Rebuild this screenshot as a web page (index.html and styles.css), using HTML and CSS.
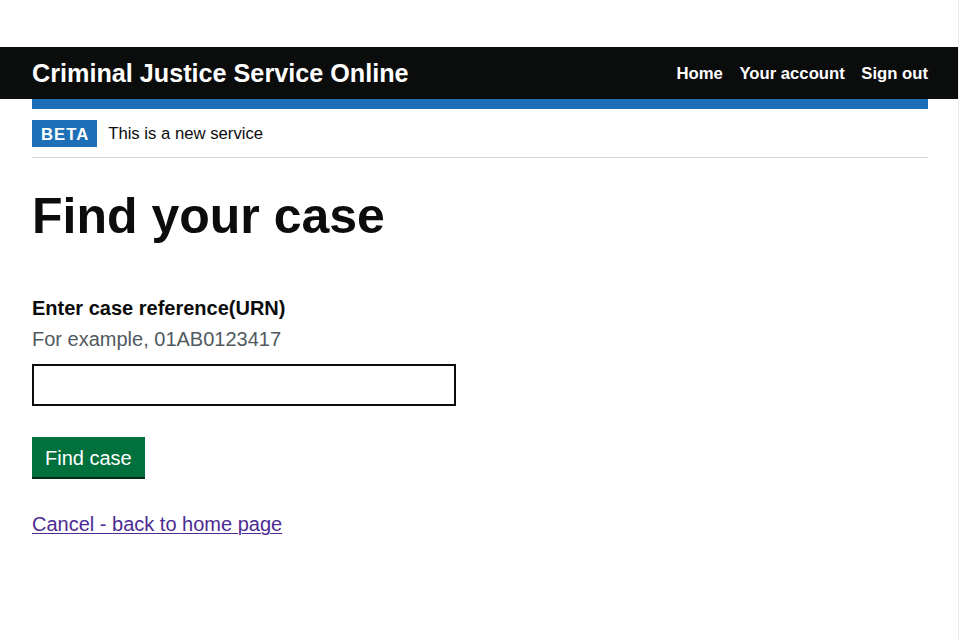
FILE: index.html
```html
<!DOCTYPE html>
<html lang="en">

<head>
    <meta charset="UTF-8">
    <meta name="viewport" content="width=device-width, initial-scale=1.0">
    <title>Find your case - Criminal Justice Service Online</title>
    <link rel="stylesheet" href="styles.css">
</head>

<body>
    <div class="page">
        <header class="header">
            <a class="service-name" href="#">Criminal Justice Service Online</a>
            <nav class="menu">
                <a href="#">Home</a>
                <a href="#">Your account</a>
                <a href="#">Sign out</a>
            </nav>
        </header>

        <div class="container">
            <div class="blue-bar"></div>
            <div class="phase-banner">
                <strong class="tag">BETA</strong>
                <span class="phase-text">This is a new service</span>
            </div>

            <main class="main">
                <h1 class="heading">Find your case</h1>
                <form class="form" action="#">
                    <label class="label" for="urn">Enter case reference(URN)</label>
                    <div class="hint">For example, 01AB0123417</div>
                    <input class="input" id="urn" name="urn" type="text">
                    <div>
                        <button class="button" type="submit">Find case</button>
                    </div>
                </form>
                <a class="back-link" href="#">Cancel - back to home page</a>
            </main>
        </div>
    </div>
</body>

</html>
```

FILE: styles.css
```css
html {
    box-sizing: border-box;
    font-family: "Liberation Sans", Arial, sans-serif;
    font-size: 16px;
}

*,
*:before,
*:after {
    box-sizing: inherit;
}

body {
    margin: 0;
    background: #fff;
    color: #0b0c0c;
}

.page {
    width: 959px;
    min-height: 640px;
    padding-top: 47px;
    border-right: 1px solid #ececec;
}

/* header */
.header {
    height: 52px;
    padding: 0 30px 0 32px;
    display: flex;
    justify-content: space-between;
    align-items: center;
    background-color: #0b0c0c;
}

.service-name {
    color: #fff;
    font-size: 25.2px;
    font-weight: bold;
    text-decoration: none;
}

.menu {
    display: flex;
    gap: 16.5px;
    padding-top: 2px;
}

.menu a {
    color: #fff;
    font-size: 16.7px;
    font-weight: bold;
    text-decoration: none;
}

.container {
    margin-left: 32px;
    margin-right: 30px;
}

.blue-bar {
    height: 10px;
    background-color: #1d70b8;
}

/* beta banner */
.phase-banner {
    display: flex;
    align-items: center;
    padding: 11px 0 10px;
    border-bottom: 1px solid #d3d4d5;
}

.tag {
    padding: 6px 8px 4px 9px;
    margin-right: 11px;
    background-color: #1d70b8;
    color: #fff;
    font-size: 16.7px;
    line-height: 17px;
    letter-spacing: 1px;
}

.phase-text {
    font-size: 16.7px;
    line-height: 20px;
    padding-top: 1px;
}

/* content */
.heading {
    margin: 31px 0 52px;
    font-size: 50px;
    line-height: 55px;
}

.label {
    display: block;
    font-size: 20px;
    font-weight: bold;
    line-height: 25px;
}

.hint {
    margin-top: 6px;
    color: #505a5f;
    font-size: 20px;
    line-height: 25px;
}

.input {
    display: block;
    width: 424px;
    height: 42px;
    margin: 12px 0 31px;
    padding: 5px;
    border: 2px solid #0b0c0c;
    border-radius: 0;
    font-family: inherit;
    font-size: 20px;
}

.button {
    padding: 9px 13px 6px;
    border: 0;
    border-radius: 0;
    background-color: #00703c;
    box-shadow: 0 2px 0 #002d18;
    color: #fff;
    font-family: inherit;
    font-size: 20px;
    line-height: 25px;
    cursor: pointer;
}

.back-link {
    display: inline-block;
    margin-top: 35px;
    color: #4c2c92;
    font-size: 20px;
    line-height: 25px;
    text-decoration-thickness: 1px;
    text-underline-offset: 2px;
}
```
